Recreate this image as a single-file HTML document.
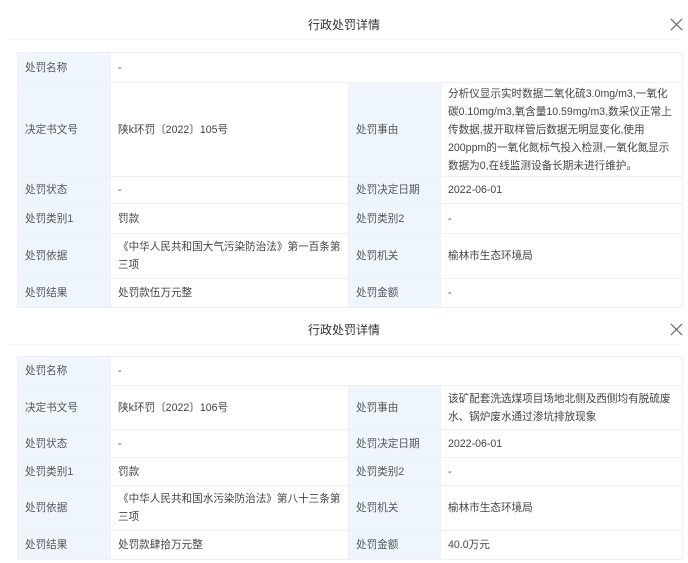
<!DOCTYPE html>
<html><head><meta charset="utf-8"><style>
*{margin:0;padding:0;box-sizing:border-box}
body{width:688px;height:563px;background:#fff;font-family:"Liberation Sans","Noto Sans CJK SC",sans-serif;color:#444;font-size:10.6px;position:relative;overflow:hidden}
.title{position:absolute;left:0;width:688px;text-align:center;font-size:12px;color:#333}
.x{position:absolute;right:5px;width:13px;height:13px}
.hl{position:absolute;left:8px;right:8px;height:1px;background:#f0f2f5}
table{position:absolute;left:17px;width:666px;border-collapse:collapse;table-layout:fixed}
td{border:1px solid #eef0f3;padding:0 6px 0 7px;vertical-align:middle;line-height:18px}
td.l{background:#eef5fc;color:#555}
</style></head><body>
<div class="title" style="top:16px">行政处罚详情</div>
<svg class="x" style="top:18px" viewBox="0 0 14 14"><path d="M1 1L13 13M13 1L1 13" stroke="#666" stroke-width="1.2"/></svg>
<div class="hl" style="top:39px"></div>
<table style="top:52px">
<colgroup><col style="width:93px"><col style="width:238px"><col style="width:92px"><col></colgroup>
<tr style="height:30px"><td class="l">处罚名称</td><td colspan="3">-</td></tr>
<tr style="height:94px"><td class="l">决定书文号</td><td>陕k环罚〔2022〕105号</td><td class="l">处罚事由</td><td>分析仪显示实时数据二氧化硫3.0mg/m3,一氧化碳0.10mg/m3,氧含量10.59mg/m3,数采仪正常上传数据,拔开取样管后数据无明显变化,使用200ppm的一氧化氮标气投入检测,一氧化氮显示数据为0,在线监测设备长期未进行维护。</td></tr>
<tr style="height:27px"><td class="l">处罚状态</td><td>-</td><td class="l">处罚决定日期</td><td>2022-06-01</td></tr>
<tr style="height:30px"><td class="l">处罚类别1</td><td>罚款</td><td class="l">处罚类别2</td><td>-</td></tr>
<tr style="height:45px"><td class="l">处罚依据</td><td>《中华人民共和国大气污染防治法》第一百条第三项</td><td class="l">处罚机关</td><td>榆林市生态环境局</td></tr>
<tr style="height:29px"><td class="l">处罚结果</td><td>处罚款伍万元整</td><td class="l">处罚金额</td><td>-</td></tr>
</table>
<div class="title" style="top:321px">行政处罚详情</div>
<svg class="x" style="top:323px" viewBox="0 0 14 14"><path d="M1 1L13 13M13 1L1 13" stroke="#666" stroke-width="1.2"/></svg>
<div class="hl" style="top:344px"></div>
<table style="top:356px">
<colgroup><col style="width:93px"><col style="width:238px"><col style="width:92px"><col></colgroup>
<tr style="height:29px"><td class="l">处罚名称</td><td colspan="3">-</td></tr>
<tr style="height:44px"><td class="l">决定书文号</td><td>陕k环罚〔2022〕106号</td><td class="l">处罚事由</td><td>该矿配套洗选煤项目场地北侧及西侧均有脱硫废水、锅炉废水通过渗坑排放现象</td></tr>
<tr style="height:28px"><td class="l">处罚状态</td><td>-</td><td class="l">处罚决定日期</td><td>2022-06-01</td></tr>
<tr style="height:28px"><td class="l">处罚类别1</td><td>罚款</td><td class="l">处罚类别2</td><td>-</td></tr>
<tr style="height:45px"><td class="l">处罚依据</td><td>《中华人民共和国水污染防治法》第八十三条第三项</td><td class="l">处罚机关</td><td>榆林市生态环境局</td></tr>
<tr style="height:29px"><td class="l">处罚结果</td><td>处罚款肆拾万元整</td><td class="l">处罚金额</td><td>40.0万元</td></tr>
</table>
</body></html>
